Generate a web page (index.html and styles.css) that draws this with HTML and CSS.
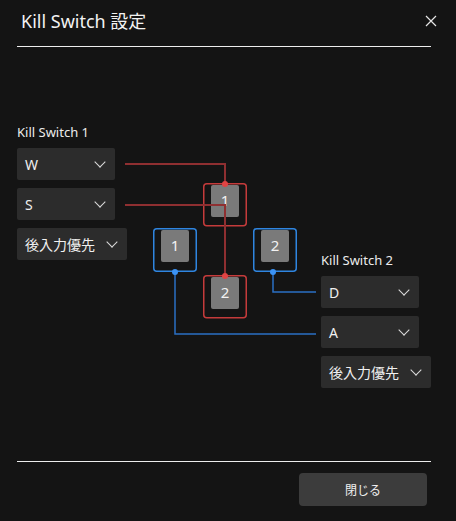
FILE: index.html
```html
<!DOCTYPE html>
<html lang="ja">
<head>
<meta charset="utf-8">
<title>Kill Switch 設定</title>
<link rel="stylesheet" href="styles.css">
</head>
<body>
<div class="dialog">
  <header class="head">
    <h1 class="title">Kill Switch 設定</h1>
    <button class="close" aria-label="閉じる">
      <svg width="12" height="12" viewBox="0 0 12 12"><path d="M1 1 L11 11 M11 1 L1 11" stroke="#e6e6e6" stroke-width="1.2" fill="none"/></svg>
    </button>
  </header>
  <div class="rule"></div>
  <main class="body">
    <svg class="diagram" width="414" height="414" viewBox="17 47 414 414">
      <g fill="none">
        <rect x="203.75" y="183.75" width="42.5" height="42" rx="3" stroke="#c53b3b" stroke-width="1.5"/>
        <rect x="203.75" y="275.75" width="42.5" height="42" rx="3" stroke="#c53b3b" stroke-width="1.5"/>
        <rect x="153.75" y="228.75" width="42.5" height="42.5" rx="3" stroke="#2f85e0" stroke-width="1.5"/>
        <rect x="253.75" y="228.75" width="42.5" height="42.5" rx="3" stroke="#2f85e0" stroke-width="1.5"/>
      </g>
      <g fill="#7a7a7a">
        <rect x="211" y="185" width="28" height="32" rx="2"/>
        <rect x="211" y="277" width="28" height="32" rx="2"/>
        <rect x="161" y="230" width="28" height="32" rx="2"/>
        <rect x="261" y="230" width="28" height="32" rx="2"/>
      </g>
      <g class="keytxt" text-anchor="middle" fill="#f2f2f2">
        <text x="225" y="206">1</text>
        <text x="225" y="298">2</text>
        <text x="175" y="251">1</text>
        <text x="275" y="251">2</text>
      </g>
      <g fill="none" stroke="#8f2f31" stroke-width="2">
        <path d="M125 164 H225 V183"/>
        <path d="M125 205 H225 V275"/>
      </g>
      <g fill="none" stroke="#2a6fc4" stroke-width="1.5">
        <path d="M175 272 V334 H316"/>
        <path d="M273 272 V292 H316"/>
      </g>
      <circle cx="225" cy="184" r="3" fill="#e04444"/>
      <circle cx="225" cy="276" r="3" fill="#e04444"/>
      <circle cx="175" cy="272" r="3" fill="#3b93f5"/>
      <circle cx="273" cy="272" r="3" fill="#3b93f5"/>
    </svg>
    <section class="group group-left">
      <div class="label">Kill Switch 1</div>
      <div class="select narrow"><span>W</span><i class="chev"></i></div>
      <div class="select narrow"><span>S</span><i class="chev"></i></div>
      <div class="select wide"><span>後入力優先</span><i class="chev"></i></div>
    </section>
    <section class="group group-right">
      <div class="label">Kill Switch 2</div>
      <div class="select narrow"><span>D</span><i class="chev"></i></div>
      <div class="select narrow"><span>A</span><i class="chev"></i></div>
      <div class="select wide"><span>後入力優先</span><i class="chev"></i></div>
    </section>
  </main>
  <div class="rule"></div>
  <footer class="foot">
    <button class="btn">閉じる</button>
  </footer>
</div>
</body>
</html>
```
FILE: styles.css
```css
html, body {
  margin: 0;
  padding: 0;
  background: #141414;
}
body {
  font-family: "Noto Sans", "Noto Sans CJK JP", sans-serif;
  color: #f0f0f0;
}
.dialog {
  width: 456px;
  height: 521px;
  box-sizing: border-box;
  padding: 0 25px 0 17px;
  display: flex;
  flex-direction: column;
}
.head {
  height: 46px;
  display: flex;
  align-items: flex-start;
  justify-content: space-between;
}
.title {
  margin: 0;
  padding: 9px 0 0 4px;
  font-size: 18px;
  line-height: 24px;
  font-weight: 400;
  color: #f2f2f2;
}
.close {
  margin: 9px -12px 0 0;
  width: 24px;
  height: 24px;
  padding: 0;
  border: 0;
  background: transparent;
  display: flex;
  align-items: center;
  justify-content: center;
}
.rule {
  height: 1px;
  background: #ededed;
}
.body {
  position: relative;
  height: 414px;
  display: flex;
  justify-content: space-between;
  align-items: flex-start;
}
.diagram {
  position: absolute;
  left: 0;
  top: 0;
}
.keytxt {
  font-family: "Noto Sans", sans-serif;
  font-size: 15px;
}
.group {
  position: relative;
  width: 110px;
  display: flex;
  flex-direction: column;
  align-items: flex-start;
  gap: 8px;
}
.group-left { margin-top: 76px; }
.group-right { margin-top: 204px; }
.label {
  font-size: 13px;
  line-height: 18px;
  color: #ececec;
  margin-bottom: -1px;
}
.select {
  height: 32px;
  box-sizing: border-box;
  background: #2c2c2c;
  border-radius: 2px;
  display: flex;
  align-items: center;
  justify-content: space-between;
  padding: 0 10px 0 8px;
  font-size: 14px;
  color: #f0f0f0;
}
.narrow { width: 98px; }
.wide { width: 110px; }
.chev {
  width: 7px;
  height: 7px;
  border-right: 1.3px solid #dcdcdc;
  border-bottom: 1.3px solid #dcdcdc;
  transform: translateY(-2px) rotate(45deg);
  margin-right: 1px;
}
.foot {
  display: flex;
  justify-content: flex-end;
  padding: 11px 4px 0 0;
}
.btn {
  width: 128px;
  height: 33px;
  border: 0;
  border-radius: 4px;
  background: #3c3c3c;
  color: #f0f0f0;
  font-family: "Noto Sans CJK JP", sans-serif;
  font-size: 12px;
}
```
